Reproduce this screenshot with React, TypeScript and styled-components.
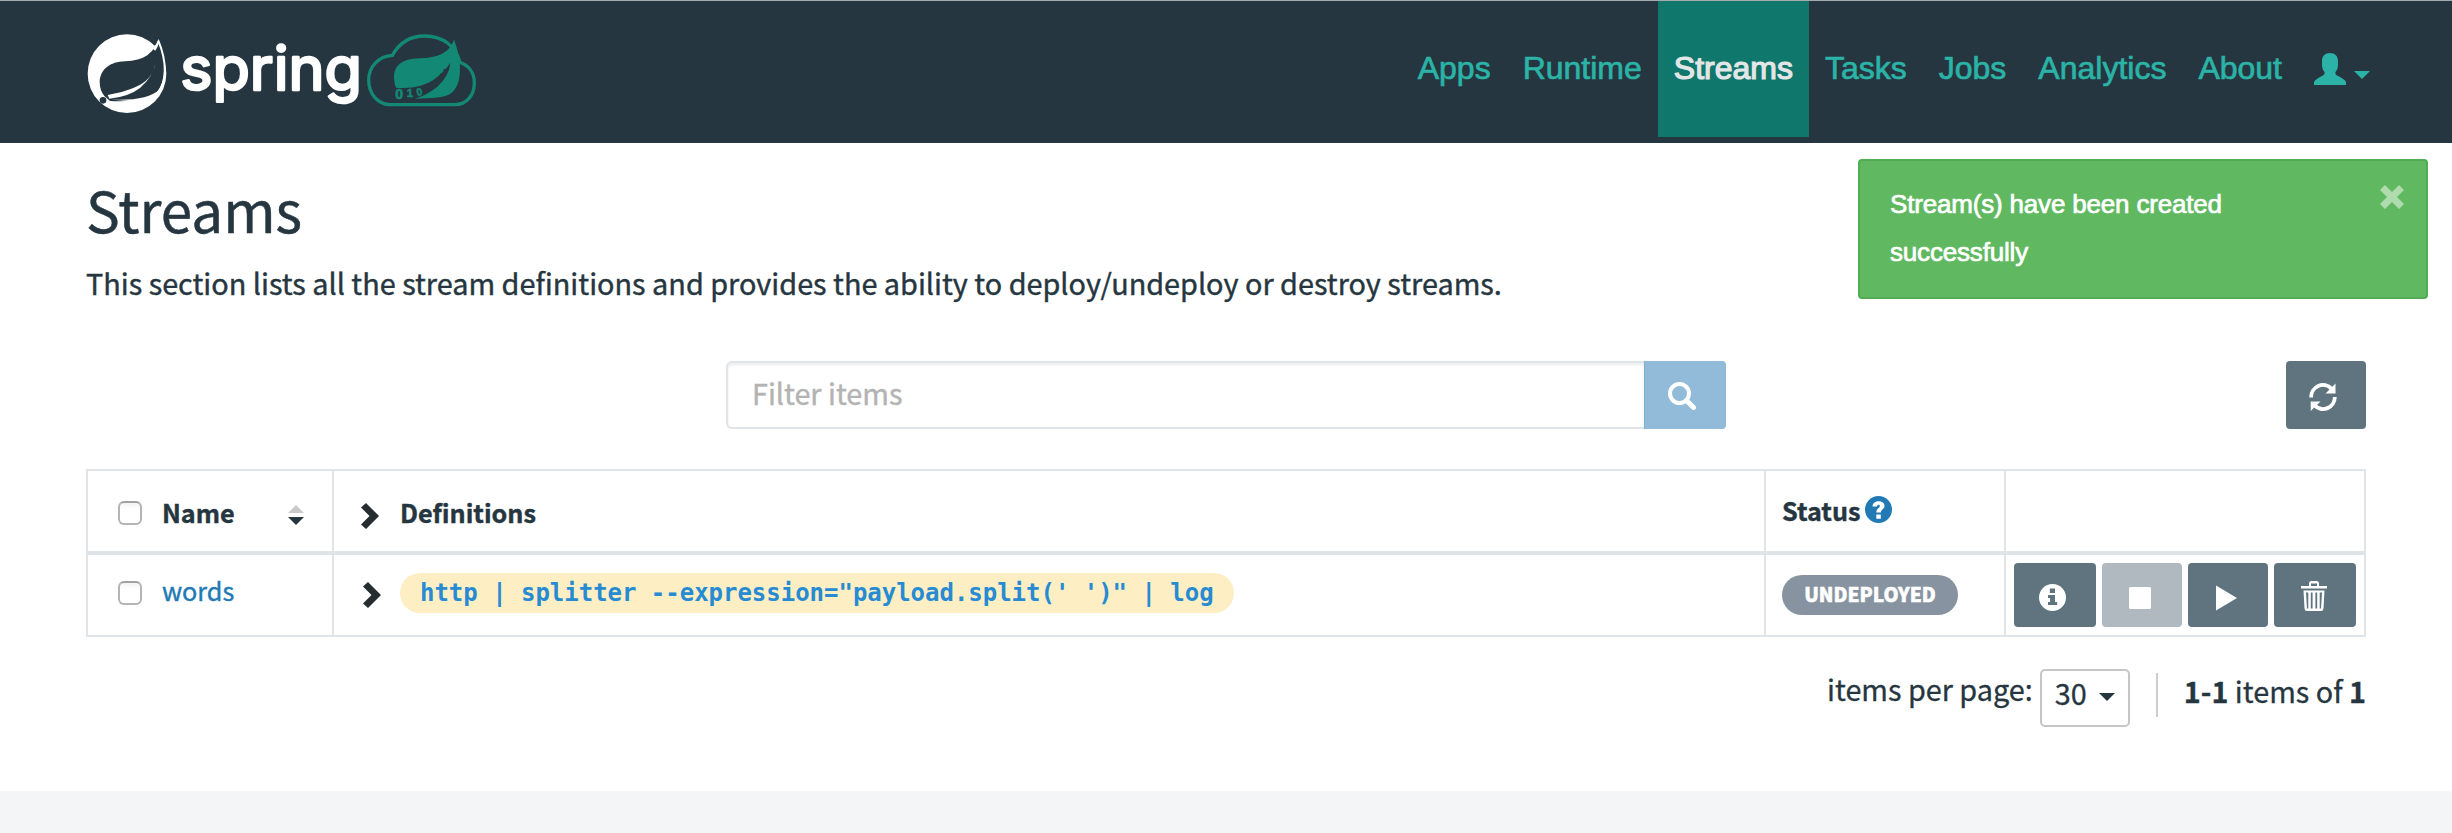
import React from 'react';
import styled, { createGlobalStyle } from 'styled-components';

const GlobalStyle = createGlobalStyle`
  * { box-sizing: border-box; }
  body {
    margin: 0;
    background: #fff;
    color: #263640;
    font-family: "Noto Sans CJK JP", "Source Sans Pro", sans-serif;
  }
`;

const Page = styled.div`
  position: relative;
  display: flex;
  flex-direction: column;
  width: 2452px;
  height: 833px;
  overflow: hidden;
`;

const Header = styled.header`
  display: flex;
  align-items: flex-start;
  height: 143px;
  padding: 0 66px 0 85px;
  border-top: 1px solid #a8abae;
  background: #263640;
`;

const Brand = styled.svg`
  width: 395px;
  height: 87px;
  margin-top: 29px;
`;

const Nav = styled.nav`
  display: flex;
  margin-left: auto;
`;

const NavLink = styled.a<{ $active?: boolean }>`
  height: 136px;
  padding: 0 16px;
  line-height: 134px;
  font-family: "Liberation Sans", Arial, sans-serif;
  font-size: 32px;
  color: ${p => (p.$active ? '#e3e6e6' : '#2ab3a6')};
  background: ${p => (p.$active ? '#0f776b' : 'transparent')};
  -webkit-text-stroke: ${p => (p.$active ? '1.2px #e3e6e6' : '0.7px #2ab3a6')};
`;

const UserMenu = styled.a`
  display: flex;
  gap: 8px;
  padding: 52px 16px 0;
  color: #2ab3a6;
`;

const Caret = styled.span<{ $up?: boolean; $top?: number; $color?: string }>`
  width: 0;
  height: 0;
  margin-top: ${p => p.$top ?? 0}px;
  border: 8px solid transparent;
  border-top-width: ${p => (p.$up ? 0 : 8)}px;
  border-bottom-width: ${p => (p.$up ? 8 : 0)}px;
  border-${p => (p.$up ? 'bottom' : 'top')}-color: ${p => p.$color ?? 'currentColor'};
`;

const Toast = styled.div`
  position: absolute;
  top: 159px;
  right: 24px;
  display: flex;
  justify-content: space-between;
  align-items: flex-start;
  width: 570px;
  height: 140px;
  padding: 19px 22px 0 30px;
  border: 2px solid #51ad55;
  border-radius: 4px;
  background: #60b860;
  color: #fff;
  font: 26px/48px "Liberation Sans", Arial, sans-serif;
  letter-spacing: -0.18px;
  -webkit-text-stroke: 0.7px #fff;
`;

const ToastText = styled.div`
  width: 420px;
`;

const CloseIcon = styled.svg`
  width: 24px;
  height: 24px;
  margin-top: 5px;
`;

const Main = styled.main`
  height: 648px;
  padding: 30px 86px 0;
`;

const Title = styled.h1`
  margin: 0;
  font-size: 56.6px;
  font-weight: 400;
  line-height: 70px;
  -webkit-text-stroke: 0.5px #263640;
`;

const Lead = styled.p`
  margin: 17px 0 0;
  font-size: 28.83px;
  line-height: 46px;
  -webkit-text-stroke: 0.4px #263640;
`;

const Toolbar = styled.div`
  display: flex;
  justify-content: space-between;
  height: 68px;
  margin: 55px 0 40px;
  padding-left: 640px;
`;

const SearchGroup = styled.div`
  display: flex;
  width: 1000px;
`;

const SearchInput = styled.input`
  flex: 1;
  padding: 0 24px 5px;
  border: 2px solid #dfe5e9;
  border-right: 0;
  border-radius: 6px 0 0 6px;
  box-shadow: inset 0 2px 3px rgba(0, 0, 0, 0.08);
  font: 28.8px "Noto Sans CJK JP", sans-serif;
  outline: none;
  &::placeholder {
    color: #b3b3b3;
    -webkit-text-stroke: 0.4px #b3b3b3;
  }
`;

const SearchButton = styled.button`
  width: 82px;
  padding: 0;
  border: 0;
  border-left: 1px solid #7fafcf;
  border-radius: 0 4px 4px 0;
  background: #91bbd8;
`;

const IconButton = styled.button<{ $width?: number; $height?: number; $disabled?: boolean }>`
  display: flex;
  align-items: center;
  justify-content: center;
  width: ${p => p.$width ?? 80}px;
  height: ${p => p.$height ?? 64}px;
  padding: 0;
  border: 0;
  border-radius: 4px;
  background: ${p => (p.$disabled ? '#b1b9c0' : '#5f747f')};
`;

const Glyph = styled.svg<{ $size?: number; $top?: number; $left?: number }>`
  display: block;
  flex: none;
  width: ${p => p.$size ?? 28}px;
  height: ${p => p.$size ?? 28}px;
  margin-top: ${p => p.$top ?? 0}px;
  margin-left: ${p => p.$left ?? 0}px;
`;

const Table = styled.div`
  border: 2px solid #dfe4e8;
`;

const Row = styled.div<{ $head?: boolean }>`
  display: grid;
  grid-template-columns: 246px 1432px 240px 358px;
  height: ${p => (p.$head ? 84 : 80)}px;
  border-bottom: ${p => (p.$head ? '4px solid #dfe4e8' : '0')};
`;

const Cell = styled.div<{ $left: number }>`
  display: flex;
  align-items: flex-start;
  padding-left: ${p => p.$left}px;
  border-right: 2px solid #dfe4e8;
  &:last-child { border-right: 0; }
`;

const Checkbox = styled.span<{ $top: number }>`
  width: 24px;
  height: 24px;
  margin: ${p => p.$top}px 20px 0 0;
  border: 2px solid #b4b4b4;
  border-top-color: #a2a2a2;
  border-radius: 6px;
  background: linear-gradient(#f3f3f3, #fff 30%);
`;

const Label = styled.span<{ $top: number; $left?: number; $bold?: boolean; $link?: boolean }>`
  margin-top: ${p => p.$top}px;
  margin-left: ${p => p.$left ?? 0}px;
  font-size: 25.2px;
  line-height: 40px;
  font-weight: ${p => (p.$bold ? 700 : 400)};
  color: ${p => (p.$link ? '#227ab5' : '#263640')};
  -webkit-text-stroke: 0.4px currentColor;
`;

const Sorter = styled.span`
  display: flex;
  flex-direction: column;
  gap: 4px;
  margin: 34px 28px 0 auto;
`;

const Code = styled.code`
  height: 40px;
  margin: 18px 0 0 11px;
  padding: 0 20px;
  border-radius: 20px;
  background: #feeec4;
  color: #268bd2;
  font: bold 24px/40px "DejaVu Sans Mono", monospace;
  letter-spacing: -0.02px;
  white-space: pre;
`;

const Badge = styled.span`
  width: 176px;
  height: 40px;
  margin-top: 20px;
  border-radius: 20px;
  background: #8793a0;
  color: #fff;
  font-size: 19.2px;
  font-weight: 900;
  line-height: 38px;
  text-align: center;
  -webkit-text-stroke: 0.5px #fff;
`;

const Actions = styled.div`
  display: flex;
  gap: 6px;
  padding-top: 8px;
`;

const Pager = styled.div`
  display: flex;
  justify-content: flex-end;
  align-items: flex-start;
  margin-top: 32px;
  font-size: 28.8px;
  line-height: 44px;
  -webkit-text-stroke: 0.3px #263640;
`;

const PageSize = styled.div`
  display: flex;
  gap: 12px;
  width: 90px;
  height: 58px;
  margin: 0 26px 0 7px;
  padding-left: 13px;
  border: 2px solid #c5c6c7;
  border-radius: 5px;
`;

const PagerText = styled.span<{ $top?: number }>`
  margin-top: ${p => p.$top ?? 0}px;
`;

const Divider = styled.span`
  width: 2px;
  height: 44px;
  margin: 4px 26px 0 0;
  background: #cbcdce;
`;

const Footer = styled.footer`
  flex: 1;
  background: #f4f5f7;
`;

const Logo = () => (
  <Brand viewBox="75 90 1185 261">
    <circle cx="201" cy="221" r="118" fill="#fff" />
    <path
      d="M288 136 Q278 154 262 166 Q237 183 195 184 C150 185 121 208 119 245 Q119 270 133 288 L150 303 C205 306 262 302 290 277 C320 245 320 175 295 118Z"
      fill="#263640"
    />
    <path d="M295 122 C321 185 322 245 291 283" fill="none" stroke="#fff" strokeWidth="6" />
    <path d="M296 116 Q289 134 278 146 L286 152 Q293 142 297 128Z" fill="#fff" />
    <path d="M286 192 Q277 240 225 262 Q195 276 143 285 L148 296 Q205 291 240 264 Q279 230 286 192Z" fill="#fff" />
    <path d="M155 299 Q260 304 300 268 Q286 296 250 306Z" fill="#fff" />
    <circle cx="129" cy="301" r="10" fill="#263640" />
    <text
      x="361"
      y="269"
      textLength="545"
      lengthAdjust="spacingAndGlyphs"
      fontFamily="Inter, sans-serif"
      fontSize="182"
      fontWeight="400"
      fill="#fff"
      stroke="#fff"
      strokeWidth="8"
      strokeLinejoin="round"
    >
      spring
    </text>
    <path
      d="M990 314 H1184 C1222 314 1243 284 1243 248 C1243 218 1226 196 1200 187 C1188 140 1150 108 1094 108 C1046 108 1016 132 997 166 C955 168 926 202 926 240 C926 282 955 314 990 314Z"
      fill="none"
      stroke="#138874"
      strokeWidth="10"
    />
    <path
      d="M1182 119 Q1172 148 1145 162 Q1122 174 1078 175 C1025 176 1002 198 1002 232 Q1002 250 1008 263 Q1080 268 1120 240 Q1155 214 1171 188 Q1168 228 1132 260 Q1105 283 1065 296 C1120 294 1150 294 1170 282 C1212 255 1204 175 1182 119Z"
      fill="#138874"
    />
    <g fill="#138874" stroke="#138874" strokeWidth="1.500" fontFamily="Liberation Sans, sans-serif" fontWeight="700">
      <text x="1006" y="297" fontSize="42" strokeWidth="2">0</text>
      <text x="1040" y="291" fontSize="34">1</text>
      <text transform="translate(1072 288) rotate(-12)" fontSize="31">0</text>
    </g>
    <g fill="#263640" fontFamily="Liberation Sans, sans-serif" fontWeight="700">
      <text transform="translate(1098 275) rotate(-24)" fontSize="27">1</text>
      <text transform="translate(1117 264) rotate(-34)" fontSize="25">1</text>
      <text transform="translate(1134 251) rotate(-44)" fontSize="23">0</text>
      <text transform="translate(1149 235) rotate(-54)" fontSize="21">1</text>
      <text transform="translate(1160 220) rotate(-62)" fontSize="19">0</text>
    </g>
  </Brand>
);

const Chevron = ({ top }: { top: number }) => (
  <Glyph viewBox="0 0 26 26" $size={26} $top={top}>
    <path d="M0 4.5 L5 0 L18 13 L5 26 L0 21.5 L8.5 13Z" fill="#262d30" />
  </Glyph>
);

export default function App() {
  return (
    <Page>
      <GlobalStyle />
      <Header>
        <Logo />
        <Nav>
          <NavLink>Apps</NavLink>
          <NavLink>Runtime</NavLink>
          <NavLink $active>Streams</NavLink>
          <NavLink>Tasks</NavLink>
          <NavLink>Jobs</NavLink>
          <NavLink>Analytics</NavLink>
          <NavLink>About</NavLink>
          <UserMenu>
            <Glyph viewBox="0 0 32 32" $size={32}>
              <path
                d="M16 0 C21 0 24 3 24 8 V12 C24 15 23 17 21.500 19 C21 21 22 22 24 23 C27 24.500 31 26.500 32 29 V32 H0 V29 C1 26.500 5 24.500 8 23 C10 22 11 21 10.500 19 C9 17 8 15 8 12 V8 C8 3 11 0 16 0Z"
                fill="currentColor"
              />
            </Glyph>
            <Caret $top={18} />
          </UserMenu>
        </Nav>
      </Header>

      <Main>
        <Title>Streams</Title>
        <Lead>
          This section lists all the stream definitions and provides the ability to deploy/undeploy or destroy streams.
        </Lead>

        <Toolbar>
          <SearchGroup>
            <SearchInput placeholder="Filter items" />
            <SearchButton>
              <Glyph viewBox="0 0 28 28" $left={23} $top={2}>
                <circle cx="11.500" cy="11.500" r="9.500" fill="none" stroke="#fff" strokeWidth="4" />
                <path d="M18.500 18.500 L25.500 25.500" stroke="#fff" strokeWidth="5" strokeLinecap="round" />
              </Glyph>
            </SearchButton>
          </SearchGroup>
          <IconButton $height={68}>
            <Glyph viewBox="0 0 28 28" $top={4} $left={-6}>
              <g fill="none" stroke="#fff" strokeWidth="3.800">
                <path d="M2.200 14.500 A11.800 11.800 0 0 1 22.500 5.600" />
                <path d="M25.800 14 A11.800 11.800 0 0 1 5.500 22.400" />
              </g>
              <path d="M26.500 0.500 V10.500 H16.500Z M1.700 28 V18.500 H11.500Z" fill="#fff" />
            </Glyph>
          </IconButton>
        </Toolbar>

        <Table>
          <Row $head>
            <Cell $left={30}>
              <Checkbox $top={30} />
              <Label $top={21} $bold>Name</Label>
              <Sorter>
                <Caret $up $color="#cacaca" />
                <Caret $color="#263640" />
              </Sorter>
            </Cell>
            <Cell $left={27}>
              <Chevron top={32} />
              <Label $top={21} $left={13} $bold>Definitions</Label>
            </Cell>
            <Cell $left={16}>
              <Label $top={19} $bold>Status</Label>
              <Glyph viewBox="0 0 27 27" $size={27} $top={25} $left={5}>
                <circle cx="13.500" cy="13.500" r="13.500" fill="#227ab5" />
                <path
                  d="M7.500 10.500 C7.500 3.500 19.500 3.500 19.500 9.800 C19.500 13.500 15.800 13.300 15.800 16.500 H11.300 C11.300 12.200 14.800 12.500 14.800 10 C14.800 8.200 12 8.300 12 10.500Z M11.300 18.500 H15.800 V22.800 H11.300Z"
                  fill="#fff"
                />
              </Glyph>
            </Cell>
            <Cell $left={8} />
          </Row>
          <Row>
            <Cell $left={30}>
              <Checkbox $top={26} />
              <Label $top={15} $link>words</Label>
            </Cell>
            <Cell $left={29}>
              <Chevron top={27} />
              <Code>{`http | splitter --expression="payload.split(' ')" | log`}</Code>
            </Cell>
            <Cell $left={16}>
              <Badge>UNDEPLOYED</Badge>
            </Cell>
            <Cell $left={8}>
              <Actions>
                <IconButton $width={82}>
                  <Glyph viewBox="0 0 27 27" $size={27} $top={4} $left={-5}>
                    <circle cx="13.500" cy="13.500" r="13.500" fill="#fff" />
                    <path d="M10.800 4.500 H16 V9 H10.800Z M9 11 H16 V18 H18.200 V21 H9 V18 H11 V14 H9Z" fill="#5f747f" />
                  </Glyph>
                </IconButton>
                <IconButton $disabled>
                  <Glyph viewBox="0 0 22 22" $size={22} $top={6} $left={-4}>
                    <rect width="22" height="22" rx="1.500" fill="#fff" />
                  </Glyph>
                </IconButton>
                <IconButton>
                  <Glyph viewBox="0 0 26 26" $size={26} $top={6} $left={0}>
                    <path d="M1 0.500 L22 13 L1 25.500Z" fill="#fff" />
                  </Glyph>
                </IconButton>
                <IconButton $width={82}>
                  <Glyph viewBox="0 0 30 30" $size={30} $top={2} $left={-3}>
                    <path
                      fillRule="evenodd"
                      d="M10 5 V2.500 Q10 0 12.500 0 H17.500 Q20 0 20 2.500 V5 H28 V7.500 H2 V5Z M12 5 H18 V2.500 H12Z M4.500 9.500 H25.500 L24.500 27.500 Q24.300 30 22 30 H8 Q5.700 30 5.500 27.500Z M7 11.500 L8 27.500 H9.300 V11.500Z M11.800 11.500 V27.500 H13.600 V11.500Z M16.400 11.500 V27.500 H18.200 V11.500Z M20.700 11.500 V27.500 H22 L23 11.500Z"
                      fill="#fff"
                    />
                  </Glyph>
                </IconButton>
              </Actions>
            </Cell>
          </Row>
        </Table>

        <Pager>
          <PagerText $top={-2}>items per page:</PagerText>
          <PageSize>
            <PagerText>30</PagerText>
            <Caret $top={22} />
          </PageSize>
          <Divider />
          <PagerText><b>1-1</b> items of <b>1</b></PagerText>
        </Pager>
      </Main>
      <Footer />

      <Toast>
        <ToastText>Stream(s) have been created successfully</ToastText>
        <CloseIcon viewBox="0 0 24 24">
          <path d="M2.500 2.500 L21.500 21.500 M21.500 2.500 L2.500 21.500" stroke="#afdbaf" strokeWidth="7" />
        </CloseIcon>
      </Toast>
    </Page>
  );
}
